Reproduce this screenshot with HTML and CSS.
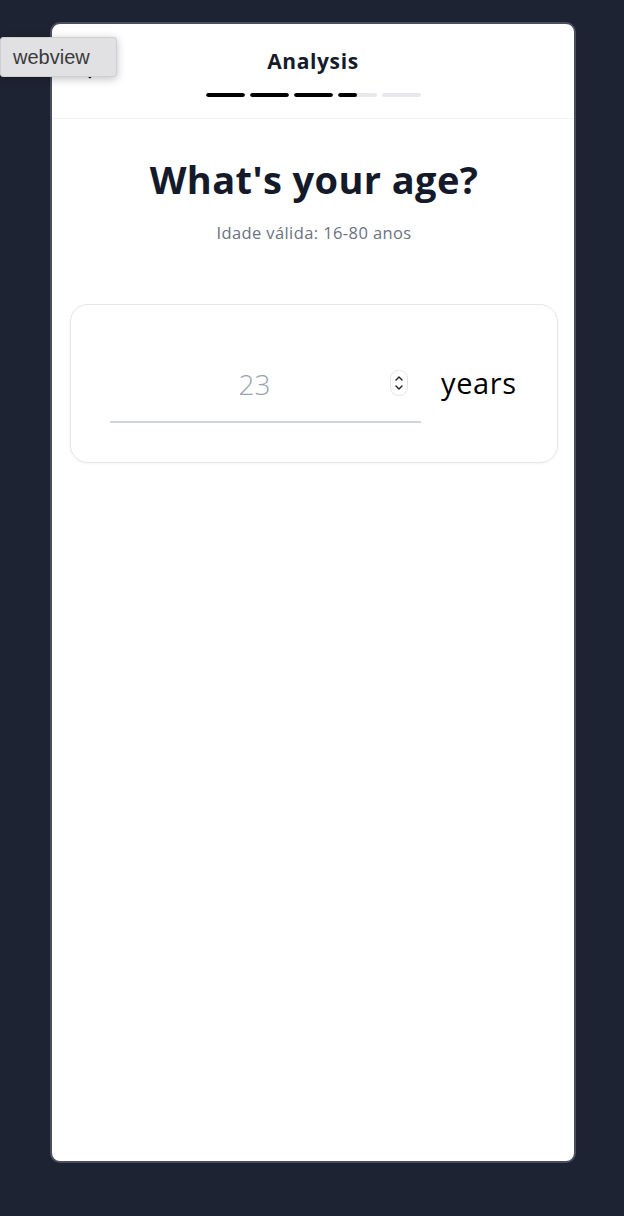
FILE: index.html
```html
<!DOCTYPE html>
<html>
<head>
<meta charset="utf-8">
<link rel="stylesheet" href="styles.css">
</head>
<body>
<div class="tooltip">webview</div>
<div class="phone">
  <header class="header">
    <div class="topline">
      <button class="back" aria-label="Back">
        <svg width="24" height="24" viewBox="0 0 24 24" fill="none" stroke="#111" stroke-width="2.5" stroke-linecap="round" stroke-linejoin="round"><path d="M19 12H5"/><path d="M12 19l-7-7 7-7"/></svg>
      </button>
      <h1 class="title">Analysis</h1>
    </div>
    <div class="progress">
      <span class="seg"><i style="width:100%"></i></span>
      <span class="seg"><i style="width:100%"></i></span>
      <span class="seg"><i style="width:100%"></i></span>
      <span class="seg"><i style="width:50%"></i></span>
      <span class="seg"><i style="width:0%"></i></span>
    </div>
  </header>
  <main class="content">
    <h2 class="question">What's your age?</h2>
    <p class="hint">Idade válida: 16-80 anos</p>
    <div class="card">
      <div class="field">
        <span class="value">23</span>
        <span class="spinner">
          <svg width="18" height="26" viewBox="0 0 18 26" fill="none"><rect x="0.5" y="0.5" width="17" height="25" rx="8" stroke="#e2e4e8" fill="#fff"/><path d="M6 10l3-3 3 3" stroke="#222" stroke-width="1.4" stroke-linecap="round" stroke-linejoin="round"/><path d="M6 16l3 3 3-3" stroke="#222" stroke-width="1.4" stroke-linecap="round" stroke-linejoin="round"/></svg>
        </span>
      </div>
      <span class="unit">years</span>
    </div>
  </main>
</div>
</body>
</html>
```
FILE: styles.css
```css
html, body {
  margin: 0;
  padding: 0;
  background: #1e2333;
  font-family: "Open Sans", "DejaVu Sans", sans-serif;
}
body {
  width: 624px;
  height: 1216px;
  position: relative;
  overflow: hidden;
  padding-top: 22px;
  box-sizing: border-box;
}
.phone {
  margin-left: 50px;
  width: 526px;
  height: 1141px;
  box-sizing: border-box;
  background: #fff;
  border: 2px solid #4a4f5f;
  border-radius: 10px;
  overflow: hidden;
}
.header {
  height: 94px;
  border-bottom: 1px solid #f1f2f4;
  display: flex;
  flex-direction: column;
  align-items: center;
}
.topline {
  width: 100%;
  position: relative;
  display: flex;
  justify-content: center;
  padding-top: 23px;
}
.back {
  position: absolute;
  left: 26px;
  top: 34px;
  border: 0;
  background: none;
  padding: 0;
}
.title {
  margin: 0;
  font-size: 21px;
  line-height: 28px;
  font-weight: 700;
  letter-spacing: 0.6px;
  color: #161b2b;
}
.progress {
  display: flex;
  gap: 5px;
  margin-top: 18px;
}
.seg {
  width: 39px;
  height: 4px;
  border-radius: 2px;
  background: #e8e9ec;
  overflow: hidden;
  display: block;
}
.seg i {
  display: block;
  height: 100%;
  background: #000;
  border-radius: 2px;
}
.content {
  padding: 38px 16px 0 18px;
  display: flex;
  flex-direction: column;
  align-items: center;
}
.question {
  margin: 0;
  font-size: 38px;
  line-height: 44px;
  font-weight: 700;
  letter-spacing: 0.4px;
  color: #141a2a;
}
.hint {
  margin: 21px 0 0;
  font-size: 16.5px;
  line-height: 22px;
  letter-spacing: 0.4px;
  color: #6b7280;
}
.card {
  margin-top: 60px;
  width: 100%;
  height: 159px;
  box-sizing: border-box;
  border: 1px solid #e4e5e9;
  border-radius: 18px;
  box-shadow: 0 1px 3px rgba(0,0,0,0.05);
  display: flex;
  align-items: center;
  padding: 0 39px 0 39px;
  gap: 20px;
}
.field {
  width: 311px;
  height: 56px;
  border-bottom: 2px solid #d1d5db;
  position: relative;
  display: flex;
  align-items: center;
  justify-content: center;
  margin-top: 22px;
  transform: translateY(-1px);
}
.value {
  font-size: 28px;
  font-weight: 300;
  color: #9ca3af;
  margin-top: -18px;
  margin-right: 22px;
}
.spinner {
  position: absolute;
  right: 13px;
  top: 5px;
  display: block;
  line-height: 0;
}
.unit {
  font-size: 29px;
  letter-spacing: 0.6px;
  color: #000;
  margin-top: -2px;
}
.tooltip {
  position: absolute;
  left: 0;
  top: 37px;
  width: 117px;
  height: 40px;
  box-sizing: border-box;
  background: #e1e1e3;
  border: 1px solid #cfcfd2;
  border-radius: 3px;
  box-shadow: 0 2px 8px rgba(0,0,0,0.25);
  color: #3a3a3c;
  font-family: "Liberation Sans", Arial, sans-serif;
  font-size: 20px;
  line-height: 38px;
  padding-left: 12px;
  z-index: 10;
}
```
